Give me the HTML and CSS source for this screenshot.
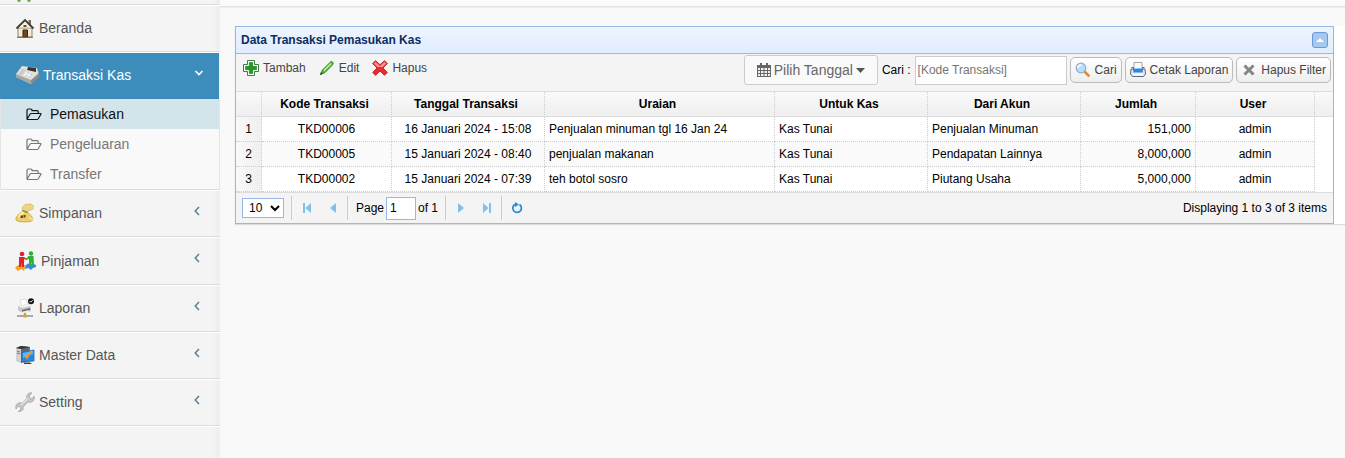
FILE: index.html
```html
<!DOCTYPE html>
<html lang="id">
<head>
  <meta charset="UTF-8">
  <meta name="viewport" content="width=device-width, initial-scale=1">
  <title>Data Transaksi Pemasukan Kas</title>
  <link rel="stylesheet" href="styles.css">
</head>

<body>

<!-- chevron menu -->
<svg class="defs" width="0" height="0" aria-hidden="true">
  <symbol id="ic-left" viewBox="0 0 8 10"><path d="M6 1 2.200 5 6 9" fill="none" stroke="#587f94" stroke-width="1.500"/></symbol>
  <symbol id="ic-folder" viewBox="0 0 16 13"><path d="M1 11V2.200Q1 1 2.200 1H4.800Q6 1 6 2.200V2.600H11Q12.200 2.600 12.200 3.800V5.500M1 11.200 4 6.200Q4.400 5.500 5.200 5.500H14.500Q15.400 5.500 14.900 6.300L12.300 10.700Q11.800 11.500 11 11.500H1.600Q1 11.500 1 11" fill="none" stroke="currentColor" stroke-width="1.200"/></symbol>
</svg>

<div class="wrapper">
  <nav class="sidebar">
    <div class="sidebar-top">
      <svg width="20" height="3" viewBox="0 0 20 3"><path d="M1 0h4l-1 2H2zM11 0h4l-1 2h-2z" fill="#7ba555"/></svg>
    </div>
    <ul class="menu">
      <li>
        <a href="#">
          <svg width="20" height="20" viewBox="0 0 20 20">
            <path d="M3 10h14v9H3z" fill="#f5edd3" stroke="#8d8570"/>
            <path d="M13.500 2h2.500v5l-2.500-2z" fill="#7a6a55"/>
            <path d="M10 3 16 9.500H4z" fill="#f8f2df"/>
            <path d="M1.500 10.500 10 2l8.500 8.500" fill="none" stroke="#423d35" stroke-width="1.800"/>
            <path d="M8 12h4.500v7H8z" fill="#7a421f" stroke="#3b2413"/>
            <path d="M8.500 7h3v2h-3z" fill="#555"/>
            <path d="M2 19.300h16" stroke="#756a50"/>
          </svg>
          <span>Beranda</span>
        </a>
      </li>
      <li class="active">
        <a href="#">
          <svg width="24" height="20" viewBox="0 0 24 20">
            <path d="M7 1 22 3l2 7-8 9-15-7V9z" fill="#e2e0dd"/>
            <path d="M1 9 16 15v4L1 12z" fill="#aaa7a3"/>
            <path d="m16 15 8-7v4l-8 7z" fill="#8d8b88"/>
            <path d="m13 2 8 1v4l-9-2z" fill="#41312e"/>
            <path d="m7 4 4 1-5 6-3-1z" fill="#c6c9ce"/>
            <path d="m12 7 6 2-3 4-6-2z" fill="#c6d2e2"/>
            <path d="m12 7-3 4M15 8l-3 4M11 9l5 2" stroke="#fff"/>
          </svg>
          <span>Transaksi Kas</span>
          <svg class="arrow" width="10" height="8" viewBox="0 0 10 8"><path d="M1.500 2 5 5.500 8.500 2" fill="none" stroke="#fff" stroke-width="1.600"/></svg>
        </a>
        <ul class="submenu">
          <li class="current"><a href="#"><svg width="16" height="13"><use href="#ic-folder"/></svg>Pemasukan</a></li>
          <li><a href="#"><svg width="16" height="13"><use href="#ic-folder"/></svg>Pengeluaran</a></li>
          <li><a href="#"><svg width="16" height="13"><use href="#ic-folder"/></svg>Transfer</a></li>
        </ul>
      </li>
      <li>
        <a href="#">
          <svg width="20" height="20" viewBox="0 0 20 20">
            <path d="M8 8Q6 4 9 3 10 0 13 1.500 16 0 17 2 19 2 18 4 19 7 15 7L12 9z" fill="#efd583" stroke="#d5b25a" stroke-width=".7"/>
            <path d="M8 8q-8 5-7 9 1 2 8 2 8 0 9-2 0-4-6-8z" fill="#ecce6c" stroke="#c39a3b" stroke-width=".7"/>
            <path d="M4 14q2-4 5-5" fill="none" stroke="#fff1ae" stroke-width="2"/>
            <path d="m8 7 5 2-1 1-5-2z" fill="#629c38"/>
            <path d="M5.500 12.500h2.500v2.500H5.500zM8.500 12h2v2.500h-2z" fill="#6a4717"/>
            <path d="M14 14l4 3" stroke="#f9eab1" stroke-width="1.500"/>
          </svg>
          <span>Simpanan</span>
          <svg class="arrow" width="8" height="10"><use href="#ic-left"/></svg>
        </a>
      </li>
      <li class="wide">
        <a href="#">
          <svg width="22" height="20" viewBox="0 0 22 20">
            <path d="M0 17q2-3 4-3 5-2 9 2l-3 1-1 3-3-2-3 2z" fill="#f5a52c"/>
            <path d="M11 14q3-3 6-1 5 0 4 3l-3 1-2 2-3-2-3 1z" fill="#3889df"/>
            <circle cx="7" cy="3" r="2.300" fill="#df2430"/>
            <path d="M4 6h5l3 2v1l-3-1v8H7v-4l-1 4H4z" fill="#df2430"/>
            <circle cx="16" cy="2.500" r="2.200" fill="#2eaf35"/>
            <path d="M18.500 5h-5L11 8v1l3-1v6h2v-3l1 3h2z" fill="#2eaf35"/>
          </svg>
          <span>Pinjaman</span>
          <svg class="arrow" width="8" height="10"><use href="#ic-left"/></svg>
        </a>
      </li>
      <li>
        <a href="#">
          <svg width="20" height="20" viewBox="0 0 20 20">
            <path d="m5 2 6-1 2 7-6 1z" fill="#fff" stroke="#ddd"/>
            <path d="m3 8 10-2 3 2v5l-9 2-4-3z" fill="#c7c7c7"/>
            <path d="m3 8 10-2 3 2-9 2z" fill="#f1f1f1"/>
            <path d="m7 12 8-2v2l-8 2z" fill="#686868"/>
            <path d="m6 14 8-2-2 3-5 1z" fill="#ececec"/>
            <path d="M2 18h16" stroke="#919191" stroke-width="1.500"/>
            <path d="M10 15v2" stroke="#bfa341" stroke-width="2"/>
            <path d="M8.500 16.500h3v3h-3z" fill="#daa32c"/>
            <circle cx="16" cy="3.200" r="3" fill="#141414"/>
            <path d="m14.500 3 1.200 1.200 2-2" fill="none" stroke="#fff" stroke-width=".9"/>
          </svg>
          <span>Laporan</span>
          <svg class="arrow" width="8" height="10"><use href="#ic-left"/></svg>
        </a>
      </li>
      <li>
        <a href="#">
          <svg width="20" height="20" viewBox="0 0 20 20">
            <path d="M1 3 6 1l9 1-1 14-8 2-5-3z" fill="#656565"/>
            <path d="m1 3 5 1v14l-5-3z" fill="#d3d3d3"/>
            <path d="m1 3 5-2 9 1-9 2z" fill="#343434"/>
            <path d="M2 6l3 1M2 8l3 1" stroke="#777"/>
            <path d="m7 7 12-2v11L7 17z" fill="#2887e3" stroke="#3a6a9a" stroke-width=".8"/>
            <path d="m8 8 10-2v3L8 13z" fill="#5ab8fa"/>
            <path d="M9 17.500h6l2 1.500H9z" fill="#3c4146"/>
            <path d="m10 10 2 3q2-5 5-7" fill="none" stroke="#f39a20" stroke-width="1.800"/>
          </svg>
          <span>Master Data</span>
          <svg class="arrow" width="8" height="10"><use href="#ic-left"/></svg>
        </a>
      </li>
      <li>
        <a href="#">
          <svg width="20" height="20" viewBox="0 0 20 20">
            <path d="M13 2q2-2 4-1l-3 3 1 2 2 1 2-3q1 3-1 5-2 2-5 1l-5 5q1 3-2 4l-3 1 3-3-1-2-2-1-2 3q-1-3 1-5 2-2 5-1l5-5q-1-2 1-4z" fill="#c6c6c6" stroke="#b0b0b0" stroke-width="1"/>
            <path d="m6 13 7-7" stroke="#e4e4e4" stroke-width="1.300"/>
          </svg>
          <span>Setting</span>
          <svg class="arrow" width="8" height="10"><use href="#ic-left"/></svg>
        </a>
      </li>
    </ul>
  </nav>

  <main class="content">
    <div class="topbar"></div>

    <div class="box">
      <section class="panel">
        <header class="panel-header">
          <h1>Data Transaksi Pemasukan Kas</h1>
          <button type="button" class="collapse" aria-label="Tutup panel">
            <svg width="16" height="16" viewBox="0 0 16 16"><path d="M4 10 8 6l4 4z" fill="#fff"/></svg>
          </button>
        </header>

        <div class="toolbar">
          <div class="tools">
            <button type="button" class="plain">
              <svg width="16" height="16" viewBox="0 0 16 16"><path d="M4.500.5h7v4h4v7h-4v4h-7v-4h-4v-7h4z" fill="#fff" stroke="#3b7c43" stroke-linejoin="round"/><path d="M6.300 2.500h3.400v3.800h3.800v3.400H9.700v3.800H6.300V9.700H2.500V6.300h3.800z" fill="#229a22" stroke="#157c1a" stroke-width=".6"/></svg>
              Tambah
            </button>
            <button type="button" class="plain">
              <svg width="16" height="16" viewBox="0 0 16 16"><path d="m1.500 14.500 2-4.500L11 2.500Q12 1 13.500 2 14.800 3 13.500 4.800L6 12.500z" fill="#5fc83a" stroke="#2f7a22"/><path d="m5 10.500 7-7" stroke="#c5f4a0" stroke-width="1.300"/><path d="m1 15 1-3 2 1.500z" fill="#3b4a2d"/></svg>
              Edit
            </button>
            <button type="button" class="plain">
              <svg width="16" height="16" viewBox="0 0 16 16"><path d="m3.500.7 4.500 4L12.500.7l2.800 2.800L11 8l4.300 4.500-2.800 2.800L8 11l-4.500 4.300-2.800-2.800L5 8 .7 3.500z" fill="#e92c2c" stroke="#c92a2e" stroke-linejoin="round"/><path d="M3.500 2 8 6l4.500-4 1.500 1.500L10.500 7h-5L2 3.500z" fill="#f79a94"/></svg>
              Hapus
            </button>
          </div>

          <form class="filters">
            <button type="button" class="btn-date">
              <svg width="14" height="14" viewBox="0 0 14 14"><path d="M0 2h14v12H0zM3 0h2v3H3zM9 0h2v3H9z" fill="#666"/><path d="M1 5h2v2H1zM4 5h2.500v2H4zM7.500 5H10v2H7.500zM11 5h2v2h-2zM1 8h2v2H1zM4 8h2.500v2H4zM7.500 8H10v2H7.500zM11 8h2v2h-2zM1 11h2v2H1zM4 11h2.500v2H4zM7.500 11H10v2H7.500zM11 11h2v2h-2z" fill="#f4f4f4"/></svg>
              Pilih Tanggal
              <svg width="9" height="5" viewBox="0 0 9 5"><path d="M0 0h9L4.500 5z" fill="#555"/></svg>
            </button>
            <label for="kode">Cari :</label>
            <input type="text" id="kode" placeholder="[Kode Transaksi]">
            <button type="button" class="btn">
              <svg width="16" height="16" viewBox="0 0 16 16"><path d="m9.500 9.500 4.800 4.800" stroke="#db8b33" stroke-width="2.600"/><circle cx="6" cy="6" r="4.800" fill="#b9dcf8" stroke="#91aac8" stroke-width="1.200"/><path d="M3 6q0-3 3.500-3" fill="none" stroke="#fff" stroke-width="1.500"/></svg>
              Cari
            </button>
            <button type="button" class="btn">
              <svg width="16" height="16" viewBox="0 0 16 16"><path d="M1 7h14l.5 5-2 2.500h-11L.500 12z" fill="#e5e7f0" stroke="#636880"/><path d="M4 .5h8V8H4z" fill="#fff" stroke="#9da3b5"/><path d="M1.500 5.500h2v3h9v-3h2" fill="none" stroke="#636880"/><path d="M4.500 6.500h7l1.500 4H3z" fill="#2589ec"/><path d="M3 12.500h10" stroke="#fff" stroke-width="1.500"/></svg>
              Cetak Laporan
            </button>
            <button type="button" class="btn">
              <svg width="16" height="16" viewBox="0 0 16 16"><path d="m3.500 3.500 9 9M12.500 3.500l-9 9" stroke="#858581" stroke-width="3"/></svg>
              Hapus Filter
            </button>
          </form>
        </div>

        <table class="datagrid">
          <colgroup>
            <col class="col-no">
            <col class="col-kode">
            <col class="col-medium">
            <col>
            <col class="col-medium">
            <col class="col-medium">
            <col class="col-jumlah">
            <col class="col-user">
            <col class="col-end">
          </colgroup>
          <thead>
            <tr>
              <th></th>
              <th>Kode Transaksi</th>
              <th>Tanggal Transaksi</th>
              <th>Uraian</th>
              <th>Untuk Kas</th>
              <th>Dari Akun</th>
              <th>Jumlah</th>
              <th>User</th>
              <th class="end"></th>
            </tr>
          </thead>
          <tbody>
            <tr>
              <td class="no">1</td>
              <td class="center">TKD00006</td>
              <td class="center">16 Januari 2024 - 15:08</td>
              <td>Penjualan minuman tgl 16 Jan 24</td>
              <td>Kas Tunai</td>
              <td>Penjualan Minuman</td>
              <td class="right">151,000</td>
              <td class="center">admin</td>
              <td class="end"></td>
            </tr>
            <tr>
              <td class="no">2</td>
              <td class="center">TKD00005</td>
              <td class="center">15 Januari 2024 - 08:40</td>
              <td>penjualan makanan</td>
              <td>Kas Tunai</td>
              <td>Pendapatan Lainnya</td>
              <td class="right">8,000,000</td>
              <td class="center">admin</td>
              <td class="end"></td>
            </tr>
            <tr>
              <td class="no">3</td>
              <td class="center">TKD00002</td>
              <td class="center">15 Januari 2024 - 07:39</td>
              <td>teh botol sosro</td>
              <td>Kas Tunai</td>
              <td>Piutang Usaha</td>
              <td class="right">5,000,000</td>
              <td class="center">admin</td>
              <td class="end"></td>
            </tr>
          </tbody>
        </table>

        <footer class="pager">
          <select aria-label="Jumlah baris">
            <option>10</option>
            <option>20</option>
            <option>50</option>
          </select>
          <span class="sep"></span>
          <button type="button" aria-label="Awal"><svg width="10" height="10" viewBox="0 0 10 10"><path d="M1 0h2v10H1zM9 0v10L3.500 5z" fill="#7fc1ec"/></svg></button>
          <button type="button" aria-label="Sebelumnya"><svg width="10" height="10" viewBox="0 0 10 10"><path d="M8 0v10L2 5z" fill="#7fc1ec"/></svg></button>
          <span class="sep"></span>
          <label class="page">Page <input type="text" value="1"></label>
          <span class="total">of 1</span>
          <span class="sep"></span>
          <button type="button" aria-label="Berikutnya"><svg width="10" height="10" viewBox="0 0 10 10"><path d="M2 0v10l6-5z" fill="#7fc1ec"/></svg></button>
          <button type="button" aria-label="Akhir"><svg width="10" height="10" viewBox="0 0 10 10"><path d="M1 0v10l5.500-5zM7 0h2v10H7z" fill="#7fc1ec"/></svg></button>
          <span class="sep"></span>
          <button type="button" aria-label="Muat ulang"><svg width="12" height="12" viewBox="0 0 12 12"><path d="M8.500 2.600A4.300 4.300 0 1 1 4 2.400" fill="none" stroke="#2b8fd3" stroke-width="1.800"/><path d="M4 0l4 2.400L4 5z" fill="#2b8fd3"/></svg></button>
          <span class="info">Displaying 1 to 3 of 3 items</span>
        </footer>
      </section>
    </div>
  </main>
</div>

</body>
</html>
```

FILE: styles.css
```css
* {
  box-sizing: border-box;
}
body {
  margin: 0;
  background: #f9f9f9;
  font-family: "Liberation Sans", Arial, sans-serif;
  font-size: 12px;
  line-height: 16px;
  color: #000;
}
button, input, select {
  font: inherit;
  margin: 0;
}
svg {
  display: block;
  flex: none;
}
.defs {
  position: absolute;
}
.wrapper {
  display: flex;
  min-height: 100vh;
}

/* menu kiri */
.sidebar {
  width: 220px;
  flex: none;
  background: linear-gradient(to right, #f4f4f4 212px, #eee);
  font-size: 14px;
}
.sidebar-top {
  height: 6px;
  padding-left: 16px;
  border-bottom: 1px solid #fff;
  box-shadow: inset 0 -1px 0 #dbdbdb;
}
.menu, .submenu {
  list-style: none;
  margin: 0;
  padding: 0;
}
.menu > li {
  border-bottom: 1px solid #fff;
  box-shadow: inset 0 -1px 0 #dbdbdb;
}
.menu > li > a {
  display: flex;
  align-items: center;
  gap: 4px;
  height: 46px;
  padding: 0 19px 2px 15px;
  color: #555;
  text-decoration: none;
}
.menu > li.wide > a {
  height: 47px;
}
.menu .arrow {
  margin: 0 0 5px auto;
}
.menu > li.active > a {
  background: #3c8dbc;
  margin-right: 1px;
  padding-right: 15px;
  color: #fff;
}
.submenu {
  background: #f9f9f9;
  border: 1px solid #e6e6e6;
  border-width: 0 1px;
  padding-bottom: 1px;
  box-shadow: inset 0 -1px 0 #dbdbdb;
}
.submenu a {
  display: flex;
  align-items: center;
  gap: 8px;
  height: 30px;
  padding-left: 25px;
  color: #777;
  text-decoration: none;
}
.submenu .current a {
  background: #d3e5eb;
  color: #111;
}

/* isi halaman */
.content {
  flex: 1;
  min-width: 0;
}
.topbar {
  height: 7px;
  background: #fbfbfb;
  border-bottom: 1px solid #e4e4e4;
  box-shadow: 0 1px 1px #eee;
}
.box {
  margin: 19px 0 0 15px;
  padding-right: 11px;
  background: #fff;
  box-shadow: 0 1px 1px #ddd;
}
.panel {
  border: 1px solid #95b8e7;
}
.panel-header {
  display: flex;
  align-items: center;
  justify-content: space-between;
  height: 27px;
  padding: 0 5px;
  background: linear-gradient(to bottom, #eff5ff, #e0ecff);
  border-bottom: 1px solid #95b8e7;
}
.panel-header h1 {
  margin: 0;
  font-size: 12px;
  color: #0e2d5f;
}
.collapse {
  padding: 0;
  border: 1px solid #6c98d2;
  border-radius: 3px;
  background: #a5c7f0;
  width: 16px;
  height: 16px;
  display: flex;
  align-items: center;
  justify-content: center;
}

/* toolbar */
.toolbar {
  display: flex;
  justify-content: space-between;
  height: 38px;
  padding: 1px 2px;
  background: #f4f4f4;
  border-bottom: 1px solid #ddd;
}
.tools {
  display: flex;
}
.plain {
  display: flex;
  align-items: center;
  gap: 4px;
  height: 26px;
  padding: 0 8px 0 5px;
  border: 0;
  background: none;
  color: #444;
}
.filters {
  display: flex;
  align-items: center;
  gap: 3px;
  height: 30px;
}
.btn-date {
  display: flex;
  align-items: center;
  gap: 3px;
  height: 30px;
  margin-right: 1px;
  padding: 0 12px;
  border: 1px solid #ccc;
  border-radius: 3px;
  background: #fafafa;
  font-size: 14px;
  color: #666;
}
.filters input {
  width: 152px;
  height: 29px;
  margin-left: 1px;
  padding: 1px 2px;
  border: 1px solid #ccc;
  background: #fff;
}
.filters input::placeholder {
  color: #757575;
}
.btn {
  display: flex;
  align-items: center;
  gap: 4px;
  height: 26px;
  padding: 0 4px;
  border: 1px solid #bbb;
  border-radius: 5px;
  background: linear-gradient(to bottom, #fff, #eee);
  color: #444;
}

/* tabel */
.datagrid {
  width: 100%;
  table-layout: fixed;
  border-collapse: separate;
  border-spacing: 0;
}
.col-no { width: 26px; }
.col-kode { width: 130px; }
.col-medium { width: 153px; }
.col-jumlah { width: 115px; }
.col-user { width: 119px; }
.col-end { width: 18px; }
.datagrid th, .datagrid td {
  height: 25px;
  padding: 0 4px;
  border: 0 dotted #ccc;
  border-width: 0 1px 1px 0;
  white-space: nowrap;
  overflow: hidden;
  text-align: left;
}
.datagrid th {
  padding-right: 8px;
  background: linear-gradient(to bottom, #f9f9f9, #efefef);
  border-bottom: 1px solid #ddd;
  text-align: center;
}
.datagrid tr:nth-child(even) td {
  background: #fafafa;
}
.datagrid .no, .datagrid tr:nth-child(even) .no {
  background: linear-gradient(to right, #f9f9f9, #efefef);
  text-align: center;
}
.datagrid .center {
  text-align: center;
}
.datagrid .right {
  text-align: right;
}
.datagrid th.end {
  border-right: 0;
}
.datagrid tr td.end, .datagrid tr:nth-child(even) td.end {
  border: 0;
  background: #fff;
}

/* paging */
.pager {
  display: flex;
  align-items: center;
  height: 31px;
  padding: 0 6px;
  background: #f4f4f4;
  border-top: 1px solid #ddd;
}
.pager select {
  width: 42px;
  height: 20px;
  margin-right: 6px;
  padding: 0 0 0 2px;
  border: 1px solid #95b8e7;
  background: #fff;
  color: #000;
}
.pager .sep {
  width: 1px;
  height: 24px;
  margin: 0 2px 0 1px;
  background: #ccc;
}
.pager button {
  display: flex;
  align-items: center;
  justify-content: center;
  width: 26px;
  height: 26px;
  padding: 0;
  border: 0;
  background: none;
}
.page {
  display: flex;
  align-items: center;
  gap: 2px;
  padding-left: 6px;
}
.page input {
  width: 30px;
  height: 23px;
  padding: 1px 3px;
  border: 1px solid #95b8e7;
  background: #fff;
}
.total {
  padding: 0 6px 0 2px;
}
.info {
  margin-left: auto;
}
```
